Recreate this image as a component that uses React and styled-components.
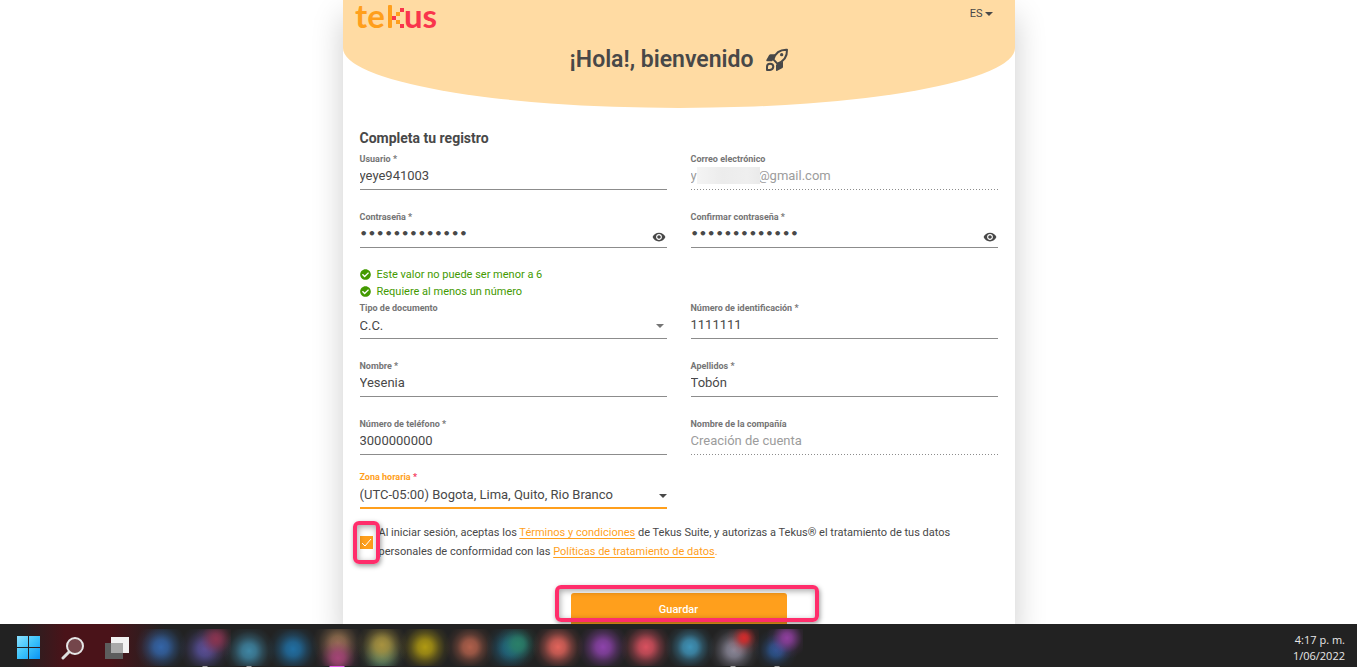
import React from "react";
import styled, { createGlobalStyle, css } from "styled-components";
import { MdVisibility } from "react-icons/md";
import { FaCheckCircle } from "react-icons/fa";

const GlobalStyle = createGlobalStyle`
  *, *::before, *::after { box-sizing: border-box; }
  body {
    margin: 0;
    background: #fff;
    color: #484848;
    font-family: Roboto, "Liberation Sans", sans-serif;
    font-size: 13px;
  }
`;

const orange = "#ff9f1c";
const pink = "#ff2d6b";

const Desktop = styled.div`
  display: flex;
  flex-direction: column;
  height: 100vh;
`;

const Page = styled.main`
  flex: 1;
  min-height: 0;
  overflow: hidden;
`;

const Card = styled.section`
  max-width: 672px;
  min-height: 100%;
  margin: 0 auto;
  background: #fff;
  box-shadow: 0 16px 30px rgba(0, 0, 0, 0.2);
`;

const Header = styled.header`
  height: 108px;
  padding: 4px 22px 0 12px;
  background: #ffdba3;
  border-radius: 0 0 50% 50% / 0 0 60px 60px;
`;

const TopBar = styled.div`
  display: flex;
  justify-content: space-between;
  align-items: flex-start;
`;

const LogoMark = styled.svg`
  display: block;
  overflow: visible;
  font-family: Lato, sans-serif;
  font-size: 33px;
  font-weight: 700;
`;

const LanguageButton = styled.button`
  display: flex;
  align-items: center;
  gap: 2px;
  padding: 0;
  border: 0;
  background: none;
  color: inherit;
  font: 11px/20px Roboto, sans-serif;
`;

const Caret = styled.span`
  border: solid transparent;
  border-width: 4px 4px 0;
  border-top-color: ${(p) => p.$color || "#484848"};
`;

const Title = styled.h1`
  display: flex;
  justify-content: center;
  align-items: center;
  gap: 12px;
  margin: 14px 0 0;
  padding-left: 12px;
  font-size: 23px;
  line-height: 30px;
  font-weight: 600;
`;

const Form = styled.form`
  padding: 22px 17px 0;
`;

const Heading = styled.h2`
  margin: 0 0 6px;
  font-size: 14px;
  line-height: 17px;
  font-weight: 700;
`;

const Grid = styled.div`
  display: grid;
  grid-template-columns: 1fr 1fr;
  column-gap: 24px;
  row-gap: 21px;
  margin-bottom: ${(p) => p.$after}px;
`;

const FieldBox = styled.div`
  position: relative;
`;

const Label = styled.label`
  display: block;
  color: ${(p) => (p.$active ? orange : "#757575")};
  font-size: 9px;
  line-height: 13px;
  font-weight: 700;
`;

const Required = styled.span`
  color: ${(p) => (p.$active ? "#f5365c" : "inherit")};
`;

const dotted = css`
  color: #9c9c9c;
  border-bottom-color: transparent;
  background: linear-gradient(to right, #8c8c8c 1px, transparent 1px) 0 100% / 3px 1px repeat-x border-box;
`;

const control = css`
  display: block;
  width: 100%;
  height: ${(p) => (p.$active ? 25 : 24)}px;
  margin: 0;
  padding: 0 0 4px;
  border: 0;
  border-bottom: ${(p) => (p.$active ? `2px solid ${orange}` : "1px solid #8c8c8c")};
  border-radius: 0;
  outline: 0;
  appearance: none;
  background: transparent;
  color: #484848;
  opacity: 1;
  font: 13px/19px Roboto, "Liberation Sans", sans-serif;
`;

const Input = styled.input`
  ${control}
  &:disabled { ${dotted} }
  &[type="password"] { font: 700 13px/19px "DejaVu Sans", sans-serif; }
`;

const Select = styled.select`
  ${control}
  padding: 0 0 2px;
`;

const Adornment = styled.span`
  position: absolute;
  right: ${(p) => p.$right || 0}px;
  bottom: 11px;
  display: flex;
  pointer-events: none;
`;

const EyeButton = styled.button`
  position: absolute;
  right: 1px;
  bottom: 4px;
  display: flex;
  padding: 0;
  border: 0;
  background: none;
  color: #484848;
`;

const Redaction = styled.span`
  position: absolute;
  left: 6px;
  top: 14px;
  width: 63px;
  height: 17px;
  background: linear-gradient(90deg, #f4f4f4, #ececec 40%, #efefef 80%, #eaeaea);
`;

const Rules = styled.ul`
  margin: 0 0 2px;
  padding: 0;
  list-style: none;
  color: #439a00;
  font-size: 11px;
  line-height: 17px;
`;

const Rule = styled.li`
  display: flex;
  align-items: center;
  gap: 6px;
`;

const Terms = styled.div`
  display: flex;
  align-items: center;
  gap: 6px;
  margin-bottom: 32px;
`;

const CheckWrap = styled.span`
  position: relative;
  display: flex;
`;

const Checkbox = styled.input`
  appearance: none;
  width: 13px;
  height: 13px;
  margin: 0;
  background: #e8e8e8;
  &:checked { background: ${orange}; }
`;

const Tick = styled.svg`
  position: absolute;
  inset: 0;
  pointer-events: none;
`;

const TermsText = styled.label`
  flex: 1;
  font-size: 11px;
  line-height: 19px;
`;

const TermsLink = styled.a`
  color: ${orange};
  text-decoration: underline;
  text-underline-offset: 2px;
`;

const TermsStop = styled.span`
  color: ${orange};
`;

const Highlight = styled.span`
  position: absolute;
  inset: ${(p) => p.$inset};
  border: 4px solid ${pink};
  border-radius: 6px;
  box-shadow: 1px 2px 5px rgba(0, 0, 0, 0.4), inset 1px 2px 6px rgba(0, 0, 0, 0.35);
  pointer-events: none;
`;

const SaveWrap = styled.div`
  position: relative;
  width: 216px;
  margin: 0 auto;
`;

const SaveButton = styled.button`
  display: block;
  width: 100%;
  height: 34px;
  padding: 0;
  border: 0;
  border-radius: 3px;
  background: ${orange};
  color: #fff;
  font: 500 11px/34px Roboto, sans-serif;
`;

const Taskbar = styled.footer`
  display: flex;
  justify-content: space-between;
  height: 43px;
  padding: 0 12px 0 7px;
  background: linear-gradient(90deg, #222 20px, #4a1319 65px, #4a1319 110px, #222 165px);
`;

const Dock = styled.div`
  display: flex;
`;

const DockButton = styled.button`
  position: relative;
  display: flex;
  align-items: center;
  justify-content: center;
  width: 44px;
  padding: 4px 0 0;
  border: 0;
  background: none;
`;

const Glow = styled.span`
  position: absolute;
  inset: 5px -4px 1px;
  background: ${(p) =>
    p.$spots
      .map(
        ([color, x, y, r]) =>
          `radial-gradient(circle at ${x + 5}px ${y}px, ${color} 0, ${color}d0 ${Math.round(r * 0.35)}px, ${color}60 ${Math.round(
            r * 0.7
          )}px, ${color}1c ${r}px, ${color}00 ${r + 6}px)`
      )
      .join(", ")};
`;

const Running = styled.span`
  position: absolute;
  bottom: 0;
  left: 50%;
  width: ${(p) => (p.$active ? 15 : 5)}px;
  height: 1px;
  transform: translateX(-50%);
  background: ${(p) => (p.$active ? "#e45be8" : "#a0a0a0")};
`;

const Clock = styled.time`
  padding-top: 8px;
  color: #e8e8e8;
  font-family: "Open Sans", "Noto Sans", sans-serif;
  font-size: 11px;
  line-height: 16px;
  text-align: right;
`;

const Logo = () => (
  <LogoMark width="86" height="27" viewBox="0 0 86 27" role="img" aria-label="tekus">
    <text x="0" y="24" fill={orange}>te</text>
    <path fill={orange} d="M33 2q0-1 1-1h2q1 0 1 1v21q0 1-1 1h-2q-1 0-1-1zM41 8h4v4h-4zM41 16h4v4h-4z" />
    <path fill="#f9354c" d="M37 12h4v4h-4zM45 4h4v4h-4zM45 20h4v4h-4z" />
    <text x="49" y="24" fill="#f9354c">us</text>
  </LogoMark>
);

const Rocket = () => (
  <svg width="24" height="24" viewBox="0 0 72 72" fill="none" stroke="#484848" strokeWidth="6" strokeLinejoin="round" aria-hidden="true">
    <path d="M25 34C30 18 40 4 66 5C67 31 53 41 37 47Z" />
    <circle cx="50" cy="20" r="5" fill="#484848" stroke="none" />
    <path stroke="none" fill="#484848" d="M32 19H17q-3 0-5 3L4 36q-1 4 2 4h15l6-6zM54 41v15q0 3-3 5l-14 7q-4 2-4-2V51l5-5z" />
    <path d="M6 66V56q0-9 9-9 10 0 10 9-1 9-10 10z" />
  </svg>
);

function Field({ id, label, required, active, children }) {
  return (
    <FieldBox>
      <Label htmlFor={id} $active={active}>
        {label}
        {required && <Required $active={active}> *</Required>}
      </Label>
      {children}
    </FieldBox>
  );
}

function PasswordField({ id, label }) {
  return (
    <Field id={id} label={label} required>
      <Input id={id} type="password" defaultValue="yesenia941003" autoComplete="new-password" />
      <EyeButton type="button" aria-label="Mostrar contraseña">
        <MdVisibility size={14} />
      </EyeButton>
    </Field>
  );
}

const apps = [
  { name: "App 1", spots: [["#3465a8", 21, 18, 20]] },
  { name: "App 2", running: true, spots: [["#8a3450", 32, 10, 15], ["#57509a", 21, 20, 20]] },
  { name: "App 3", running: true, spots: [["#3f86a4", 21, 22, 20]] },
  { name: "App 4", spots: [["#216fa3", 21, 20, 20]] },
  { name: "App 5", running: true, active: true, spots: [["#a44476", 22, 29, 17], ["#93704f", 22, 14, 20]] },
  { name: "App 6", spots: [["#a8923f", 22, 16, 20], ["#4c7b68", 22, 27, 18]] },
  { name: "App 7", spots: [["#b09a12", 21, 18, 20]] },
  { name: "App 8", spots: [["#b0604b", 22, 18, 19]] },
  { name: "App 9", spots: [["#2a7f68", 26, 15, 16], ["#1f6484", 18, 19, 20]] },
  { name: "App 10", spots: [["#e2645b", 22, 18, 20]] },
  { name: "App 11", spots: [["#8d43ab", 23, 18, 20]] },
  { name: "App 12", spots: [["#d9515f", 22, 18, 20]] },
  { name: "App 13", spots: [["#3f93b8", 22, 18, 19]] },
  { name: "App 14", running: true, spots: [["#d42b2b", 32, 9, 12], ["#8a8798", 22, 21, 20]] },
  { name: "App 15", running: true, spots: [["#8f3f9e", 31, 9, 15], ["#2c5590", 20, 21, 16]] },
];

export default function App() {
  return (
    <>
      <GlobalStyle />
      <Desktop>
        <Page>
          <Card>
            <Header>
              <TopBar>
                <Logo />
                <LanguageButton type="button">
                  ES
                  <Caret />
                </LanguageButton>
              </TopBar>
              <Title>
                ¡Hola!, bienvenido
                <Rocket />
              </Title>
            </Header>

            <Form onSubmit={(e) => e.preventDefault()}>
              <Heading>Completa tu registro</Heading>
              <Grid $after={18}>
                <Field id="user" label="Usuario" required>
                  <Input id="user" defaultValue="yeye941003" />
                </Field>
                <Field id="email" label="Correo electrónico">
                  <Input id="email" disabled defaultValue={"y" + "\u00a0".repeat(19) + "@gmail.com"} />
                  <Redaction />
                </Field>
                <PasswordField id="password" label="Contraseña" />
                <PasswordField id="confirm" label="Confirmar contraseña" />
              </Grid>

              <Rules>
                <Rule><FaCheckCircle size={11} />Este valor no puede ser menor a 6</Rule>
                <Rule><FaCheckCircle size={11} />Requiere al menos un número</Rule>
              </Rules>

              <Grid $after={16}>
                <Field id="docType" label="Tipo de documento">
                  <Select id="docType" defaultValue="cc">
                    <option value="cc">C.C.</option>
                  </Select>
                  <Adornment $right={3}><Caret $color="#757575" /></Adornment>
                </Field>
                <Field id="docNumber" label="Número de identificación" required>
                  <Input id="docNumber" defaultValue="1111111" />
                </Field>
                <Field id="name" label="Nombre" required>
                  <Input id="name" defaultValue="Yesenia" />
                </Field>
                <Field id="surname" label="Apellidos" required>
                  <Input id="surname" defaultValue="Tobón" />
                </Field>
                <Field id="phone" label="Número de teléfono" required>
                  <Input id="phone" type="tel" defaultValue="3000000000" />
                </Field>
                <Field id="company" label="Nombre de la compañía">
                  <Input id="company" disabled defaultValue="Creación de cuenta" />
                </Field>
              </Grid>

              <Grid $after={14}>
                <Field id="zone" label="Zona horaria" required active>
                  <Select id="zone" $active defaultValue="bogota">
                    <option value="bogota">(UTC-05:00) Bogota, Lima, Quito, Rio Branco</option>
                  </Select>
                  <Adornment><Caret /></Adornment>
                </Field>
              </Grid>

              <Terms>
                <CheckWrap>
                  <Checkbox id="terms" type="checkbox" defaultChecked />
                  <Tick width="13" height="13" viewBox="0 0 13 13" aria-hidden="true">
                    <path d="M2 7l3 3 6-7" fill="none" stroke="#fff" />
                  </Tick>
                  <Highlight $inset="-15px -7px" />
                </CheckWrap>
                <TermsText htmlFor="terms">
                  Al iniciar sesión, aceptas los <TermsLink href="#terminos">Términos y condiciones</TermsLink> de
                  Tekus Suite, y autorizas a Tekus® el tratamiento de tus datos personales de conformidad con las{" "}
                  <TermsLink href="#politicas">Políticas de tratamiento de datos</TermsLink>
                  <TermsStop>.</TermsStop>
                </TermsText>
              </Terms>

              <SaveWrap>
                <SaveButton type="submit">Guardar</SaveButton>
                <Highlight $inset="-8px -32px 5px -16px" />
              </SaveWrap>
            </Form>
          </Card>
        </Page>

        <Taskbar>
          <Dock>
            <DockButton type="button" aria-label="Inicio">
              <svg width="24" height="24" viewBox="0 0 24 24">
                <defs>
                  <linearGradient id="win" x2="1" y2="1">
                    <stop stopColor="#8be1ff" />
                    <stop offset="0.5" stopColor="#3cc3fb" />
                    <stop offset="1" stopColor="#0a93f5" />
                  </linearGradient>
                </defs>
                <path fill="url(#win)" d="M0 0h11v11H0zM12 0h11v11H12zM0 12h11v11H0zM12 12h11v11H12z" />
              </svg>
            </DockButton>
            <DockButton type="button" aria-label="Buscar">
              <svg width="24" height="24" viewBox="0 0 24 24">
                <path d="M2 22l6-6" stroke="#ddd" strokeWidth="3" strokeLinecap="round" />
                <circle cx="14" cy="10" r="8" fill="#74464b" stroke="#e6e6e6" strokeWidth="2" />
              </svg>
            </DockButton>
            <DockButton type="button" aria-label="Vista de tareas">
              <svg width="24" height="22" viewBox="0 0 24 22">
                <path fill="#5d5d5d" d="M0 6h18v16H0z" />
                <path fill="#f2f2f2" d="M6 0h18v16H6z" />
                <path fill="#a9a9a9" d="M6 6h12v10H6z" />
              </svg>
            </DockButton>
            {apps.map((app) => (
              <DockButton type="button" key={app.name} aria-label={app.name}>
                <Glow $spots={app.spots} />
                {app.running && <Running $active={app.active} />}
              </DockButton>
            ))}
          </Dock>
          <Clock dateTime="2022-06-01T16:17">
            4:17 p. m.
            <br />
            1/06/2022
          </Clock>
        </Taskbar>
      </Desktop>
    </>
  );
}
